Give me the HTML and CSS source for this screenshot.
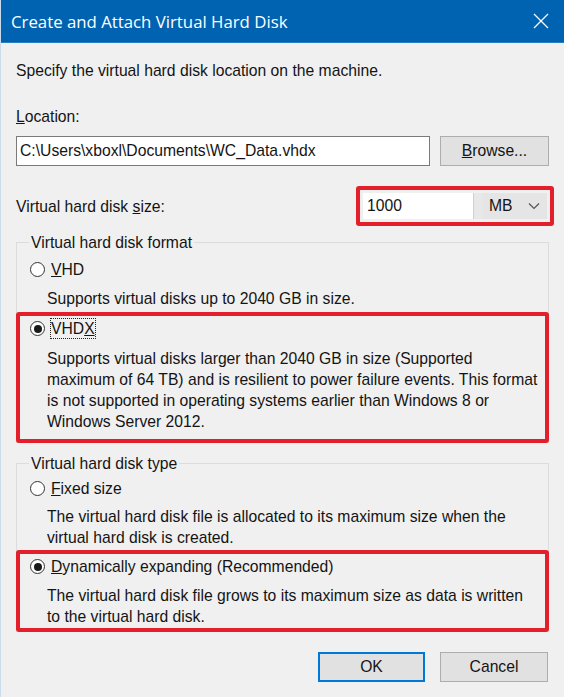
FILE: index.html
```html
<!DOCTYPE html>
<html>
<head>
<meta charset="utf-8">
<link rel="stylesheet" href="styles.css">
</head>
<body>
<div class="window">
  <div class="titlebar">
    <span class="title">Create and Attach Virtual Hard Disk</span>
    <svg class="close" width="16" height="16" viewBox="0 0 16 16"><path d="M1 1 L15 15 M15 1 L1 15" stroke="#fff" stroke-width="1.3" fill="none"/></svg>
  </div>
  <div class="content">
    <div class="line intro">Specify the virtual hard disk location on the machine.</div>
    <div class="line loc-label"><u>L</u>ocation:</div>
    <div class="loc-row">
      <div class="textbox path">C:\Users\xboxl\Documents\WC_Data.vhdx</div>
      <div class="btn browse"><u>B</u>rowse...</div>
    </div>
    <div class="size-row">
      <div class="line">Virtual hard disk <u>s</u>ize:</div>
      <div class="mark size-mark">
        <div class="textbox num">1000</div>
        <div class="spin"></div>
        <div class="combo"><span>MB</span>
          <svg width="12" height="8" viewBox="0 0 12 8"><path d="M1 1.5 L6 6.5 L11 1.5" stroke="#555" stroke-width="1.2" fill="none"/></svg>
        </div>
      </div>
    </div>
    <fieldset class="group g1">
      <legend>Virtual hard disk format</legend>
      <div class="radio-row r-vhd"><span class="radio"></span><span class="rlabel"><u>V</u>HD</span></div>
      <div class="desc d-vhd">Supports virtual disks up to 2040 GB in size.</div>
      <div class="mark opt-mark m1">
        <div class="radio-row"><span class="radio on"></span><span class="rlabel focus">VHD<u>X</u></span></div>
        <div class="desc d-in">Supports virtual disks larger than 2040 GB in size (Supported<br>maximum of 64 TB) and is resilient to power failure events. This format<br>is not supported in operating systems earlier than Windows 8 or<br>Windows Server 2012.</div>
      </div>
    </fieldset>
    <fieldset class="group g2">
      <legend>Virtual hard disk type</legend>
      <div class="radio-row r-fixed"><span class="radio"></span><span class="rlabel"><u>F</u>ixed size</span></div>
      <div class="desc d-fixed">The virtual hard disk file is allocated to its maximum size when the<br>virtual hard disk is created.</div>
      <div class="mark opt-mark m2">
        <div class="radio-row"><span class="radio on"></span><span class="rlabel"><u>D</u>ynamically expanding (Recommended)</span></div>
        <div class="desc d-in2">The virtual hard disk file grows to its maximum size as data is written<br>to the virtual hard disk.</div>
      </div>
    </fieldset>
    <div class="buttons">
      <div class="btn ok">OK</div>
      <div class="btn cancel">Cancel</div>
    </div>
  </div>
</div>
</body>
</html>
```
FILE: styles.css
```css
* { box-sizing: border-box; }
html, body { margin: 0; padding: 0; }
body {
  width: 564px;
  height: 697px;
  overflow: hidden;
  background: #f0f0f0;
  font-family: "Liberation Sans", Arial, sans-serif;
  font-size: 15.7px;
  color: #141414;
}
.window {
  height: 697px;
  border-left: 1px solid #c9dcee;
}
.titlebar {
  height: 43px;
  background: #0063b1;
  display: flex;
  align-items: center;
  justify-content: space-between;
  padding: 0 15px 0 10px;
  border-bottom: 1px solid #2a7cc0;
}
.title {
  color: #fff;
  font-family: "Open Sans", "Noto Sans", sans-serif;
  font-size: 16.8px;
}
.close { display: block; }
.content {
  padding: 0 15px 0 15px;
}
.line { line-height: 21px; }
.intro { margin-top: 17px; }
.loc-label { margin-top: 25px; }
.loc-row {
  margin-top: 9px;
  display: flex;
  justify-content: space-between;
  height: 30px;
}
.textbox {
  background: #fff;
  border: 1px solid #7a7a7a;
  line-height: 28px;
  padding-left: 3px;
}
.path { width: 414px; }
.btn {
  background: #e1e1e1;
  border: 1px solid #adadad;
  height: 30px;
  line-height: 28px;
  text-align: center;
}
.browse { width: 109px; }
.size-row {
  margin-top: 20px;
  height: 40px;
  display: flex;
  align-items: center;
  justify-content: space-between;
  margin-right: -5px;
}
.mark {
  border: 4px solid #e21f2b;
  border-radius: 3px;
}
.size-mark {
  width: 198px;
  height: 40px;
  padding: 3px;
  display: flex;
}
.num {
  width: 110px;
  height: 26px;
  line-height: 24px;
  border: 1px solid #fff;
}
.spin {
  width: 10px;
  background: #e8e8e8;
  border-left: 1px solid #d0d0d0;
}
.combo {
  flex: 1;
  background: #e5e5e5;
  display: flex;
  align-items: center;
  justify-content: space-between;
  padding: 0 7px 0 6px;
}
.group {
  margin: 0;
  padding: 0;
  border: 1px solid #dcdcdc;
  min-width: 0;
}
.group legend {
  padding: 0 2px;
  margin-left: 12px;
  line-height: 21px;
}
.g1 { margin-top: 6px; }
.g2 { margin-top: 10px; }
.radio-row {
  display: flex;
  align-items: center;
  line-height: 21px;
  height: 21px;
}
.radio {
  width: 15px;
  height: 15px;
  border: 1px solid #333;
  border-radius: 50%;
  background: #fff;
  margin-right: 6px;
  display: flex;
  align-items: center;
  justify-content: center;
}
.radio.on::after {
  content: "";
  width: 8px;
  height: 8px;
  border-radius: 50%;
  background: #1a1a1a;
}
.rlabel { line-height: 19px; }
.focus { outline: 1px dotted #222; outline-offset: 0; }
.desc { line-height: 21px; }
.r-vhd { margin-top: 6px; padding-left: 13px; }
.d-vhd { margin-top: 8px; padding-left: 30px; }
.opt-mark {
  margin: 0 -1px -1px -1px;
  padding-left: 10px;
}
.m1 { margin-top: 3px; padding-top: 2px; padding-bottom: 7px; }
.d-in { margin-top: 9px; padding-left: 17px; }
.r-fixed { margin-top: 4px; padding-left: 13px; }
.d-fixed { margin-top: 7px; padding-left: 30px; }
.m2 { margin-top: 2px; padding-top: 2px; padding-bottom: 1px; }
.d-in2 { margin-top: 8px; padding-left: 17px; }
.buttons {
  margin-top: 20px;
  display: flex;
  justify-content: flex-end;
  gap: 15px;
  margin-right: 1px;
}
.ok { width: 107px; border: 2px solid #0078d7; line-height: 26px; }
.cancel { width: 108px; }
```
